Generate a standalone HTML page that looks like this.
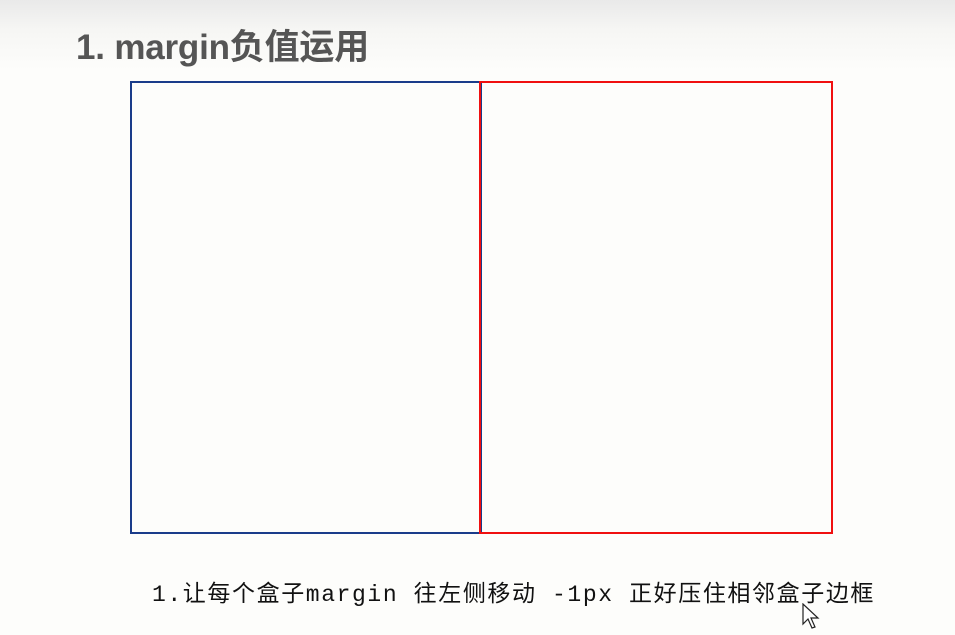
<!DOCTYPE html>
<html><head><meta charset="utf-8"><style>
html,body{margin:0;padding:0}
body{width:955px;height:635px;overflow:hidden;position:relative;background:linear-gradient(#e9e9e9 0px,#f6f6f4 30px,#fdfdfb 70px,#fdfdfb 100%);}
h1{position:absolute;left:76px;top:19px;margin:0;font:bold 35px "Liberation Sans","Noto Sans CJK SC",sans-serif;color:#555;letter-spacing:-0.2px}
.b{position:absolute;box-sizing:border-box;border:2px solid}
.blue{left:130px;top:81px;width:352px;height:453px;border-color:#1a3c8a}
.red{left:479px;top:81px;width:354px;height:453px;border-color:#f01010}
.t{position:absolute;left:152px;top:574px;font:23px "Liberation Mono","Noto Sans CJK SC",monospace;color:#111;white-space:nowrap;letter-spacing:1.6px}
</style></head><body>
<h1>1. margin负值运用</h1>
<div class="b blue"></div>
<div class="b red"></div>
<div class="t">1.让每个盒子margin 往左侧移动 -1px 正好压住相邻盒子边框</div>
<svg style="position:absolute;left:802px;top:603px" width="20" height="28" viewBox="0 0 20 28"><path d="M1 1 L1 21 L6 16 L10 25 L13 24 L9 15 L16 15 Z" fill="#fff" stroke="#222" stroke-width="1.2"/></svg>
</body></html>
